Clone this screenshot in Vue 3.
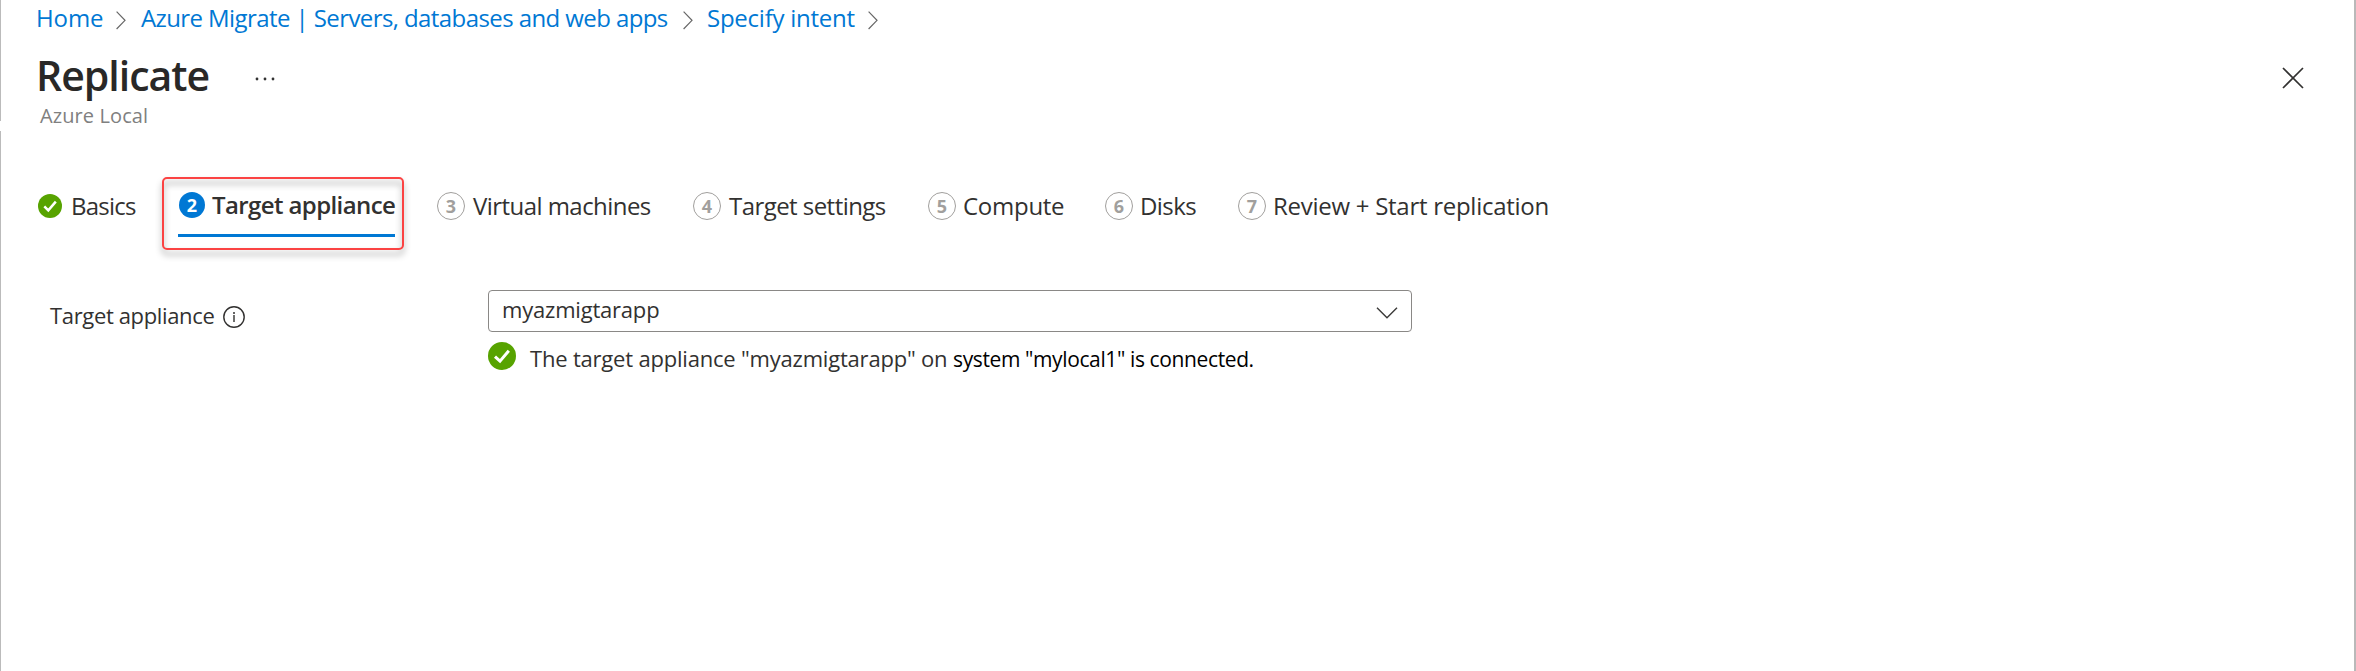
<script setup>
const crumbs = [
  { text: 'Home', cls: 'home' },
  { text: 'Azure Migrate | Servers, databases and web apps', cls: 'migrate' },
  { text: 'Specify intent', cls: 'intent' },
]
const steps = [
  { n: 1, text: 'Basics', cls: 'done basics' },
  { n: 2, text: 'Target appliance', cls: 'active' },
  { n: 3, text: 'Virtual machines', cls: 'tight' },
  { n: 4, text: 'Target settings', cls: 'tight' },
  { n: 5, text: 'Compute', cls: 'near' },
  { n: 6, text: 'Disks', cls: 'tight near' },
  { n: 7, text: 'Review + Start replication', cls: 'near' },
]
</script>

<template>
  <div class="blade">
    <div class="edge"><i class="edge-top"></i><i class="edge-bottom"></i></div>

    <main class="content">
      <nav class="crumbs">
        <template v-for="c in crumbs" :key="c.text">
          <a :class="c.cls">{{ c.text }}</a>
          <svg class="sep" width="10" height="19" viewBox="0 0 10 19">
            <path d="M.6 .7 9 9.3 .6 18" fill="none" stroke="#666" stroke-width="1.2" />
          </svg>
        </template>
      </nav>

      <header class="head">
        <h1>Replicate</h1>
        <svg class="more" width="20" height="4" viewBox="0 0 20 4">
          <g fill="#333"><circle cx="2" cy="2" r="1.4" /><circle cx="10" cy="2" r="1.4" /><circle cx="18" cy="2" r="1.4" /></g>
        </svg>
        <svg class="close" width="22" height="22" viewBox="0 0 22 22">
          <path d="M1 1 21 21M21 1 1 21" stroke="#323130" stroke-width="1.7" />
        </svg>
      </header>
      <p class="sub">Azure Local</p>

      <div class="steps">
        <div v-for="s in steps" :key="s.n" class="step" :class="s.cls">
          <svg v-if="s.n === 1" class="check" width="24" height="24" viewBox="0 0 24 24">
            <circle cx="12" cy="12" r="12" fill="#57a300" />
            <path d="M6.3 12.4 10.3 16.4 17.8 7.6" fill="none" stroke="#fff" stroke-width="2.5" />
          </svg>
          <b v-else class="num">{{ s.n }}</b>
          <span class="name">{{ s.text }}</span>
          <i v-if="s.n === 2" class="highlight"></i>
        </div>
      </div>

      <section class="form">
        <div class="label">
          <span>Target appliance</span>
          <svg width="22" height="22" viewBox="0 0 22 22">
            <circle cx="11" cy="11" r="10.2" fill="none" stroke="#323130" stroke-width="1.4" />
            <circle cx="11" cy="6.9" r="1" fill="#323130" />
            <path d="M11 9v7" stroke="#323130" stroke-width="1.4" />
          </svg>
        </div>
        <div class="field">
          <div class="select">
            <span>myazmigtarapp</span>
            <svg width="22" height="12" viewBox="0 0 22 12">
              <path d="M1 .8 11 10.8 21 .8" fill="none" stroke="#3b3a39" stroke-width="1.4" />
            </svg>
          </div>
          <div class="status">
            <svg width="28" height="28" viewBox="0 0 28 28">
              <circle cx="14" cy="14" r="14" fill="#57a300" />
              <path d="M7 14.6 12 19.2 20.8 8.7" fill="none" stroke="#fff" stroke-width="3" />
            </svg>
            <span class="msg">The target appliance "myazmigtarapp" on</span>
            <span class="msg2">system "mylocal1" is connected.</span>
          </div>
        </div>
      </section>
    </main>
  </div>
</template>

<style scoped>
.blade {
  box-sizing: border-box;
  display: flex;
  width: 2356px;
  height: 671px;
  overflow: hidden;
  background: #fff;
  border-right: 2px solid #b9b9b9;
  font-family: "Open Sans", "Noto Sans", sans-serif;
  font-size: 24px;
  color: #323130;
  white-space: nowrap;
}
.edge { display: flex; flex-direction: column; width: 1px; gap: 10px; }
.edge-top { height: 121px; background: #bbb; }
.edge-bottom { flex: 1; background: #bbb; }
.content { flex: 1; padding-left: 34px; }

.crumbs {
  display: grid;
  grid-template-columns: 81px 25px 542px 24px 161px 10px;
  align-items: center;
  height: 36px;
  line-height: 36px;
  color: #0078d4;
}
.sep { margin-top: 4px; }
.home { padding-left: 1px; letter-spacing: -0.1px; }
.migrate { letter-spacing: -0.59px; }
.intent { letter-spacing: -0.25px; }

.head { display: flex; align-items: center; height: 50px; margin-top: 14px; }
h1 { box-sizing: border-box; width: 220px; margin: 0; padding-left: 1px; font-size: 41px; line-height: 50px; font-weight: 600; letter-spacing: -1px; color: #292827; }
.more { margin-top: 7px; }
.close { margin: 6px 50px 0 auto; }
.sub { margin: 2px 0 0 5px; font-size: 20px; line-height: 28px; letter-spacing: 0.1px; color: #808080; }

.steps {
  display: grid;
  grid-template-columns: 140px 259px 256px 235px 177px 133px auto;
  height: 48px;
  margin: 52px 0 0 3px;
}
.step { display: flex; align-items: center; letter-spacing: -0.27px; }
.tight { letter-spacing: -0.55px; }
.basics { letter-spacing: -0.75px; }
.basics .name { margin-left: 9px; }
.num {
  box-sizing: border-box;
  display: flex;
  align-items: center;
  justify-content: center;
  width: 28px;
  height: 28px;
  border: 1px solid #a19f9d;
  border-radius: 50%;
  font-size: 18px;
  line-height: 1;
  font-weight: 700;
  letter-spacing: 0;
  color: #a19f9d;
}
.name { margin-left: 8px; line-height: 48px; }
.near .name { margin-left: 7px; }
.active { position: relative; top: -1px; font-weight: 600; letter-spacing: -0.6px; }
.active .name { margin-left: 7px; }
.active .num { width: 26px; height: 26px; margin-left: 1px; border: 0; background: #0078d4; color: #fff; }
.active::after { content: ""; position: absolute; left: 0; top: 53px; width: 217px; height: 3px; background: #0078d4; }
.highlight {
  position: absolute;
  box-sizing: border-box;
  left: -16px;
  top: -4px;
  width: 242px;
  height: 73px;
  border: 2px solid #fb4343;
  border-radius: 5px;
  filter: drop-shadow(0 5px 3px rgba(0, 0, 0, 0.4));
}

.form { display: flex; margin: 60px 0 0 15px; font-size: 22px; }
.label { display: flex; align-items: center; gap: 9px; width: 438px; height: 51px; letter-spacing: -0.35px; }
.label span { line-height: 51px; }
.label svg { margin-top: 2px; }
.select {
  box-sizing: border-box;
  display: flex;
  align-items: center;
  justify-content: space-between;
  width: 924px;
  height: 42px;
  padding: 0 13px;
  border: 1px solid #8a8886;
  border-radius: 4px;
  letter-spacing: -0.2px;
}
.select span { margin-top: -5px; }
.select svg { margin-top: 3px; }
.status { display: flex; align-items: center; height: 28px; margin-top: 10px; line-height: 28px; }
.msg { margin: 4px 0 0 14px; width: 423px; letter-spacing: -0.2px; }
.msg2 { margin-top: 5px; font-size: 21px; letter-spacing: -0.38px; color: #000; }
</style>
